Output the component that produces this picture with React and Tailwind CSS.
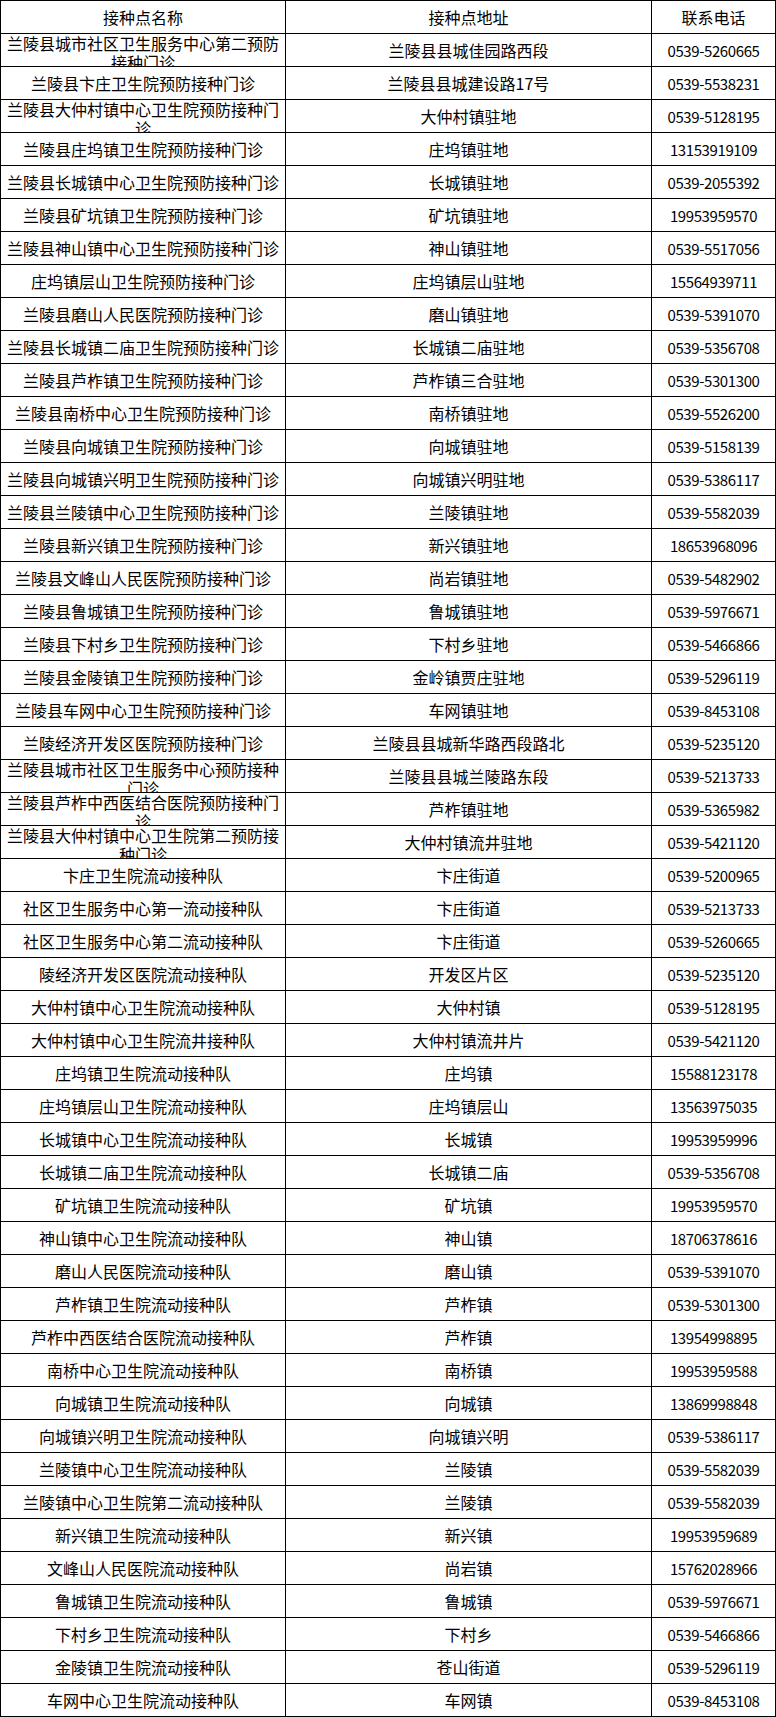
import React from "react";

const rows = [
  ["兰陵县城市社区卫生服务中心第二预防接种门诊", "兰陵县县城佳园路西段", "0539-5260665"],
  ["兰陵县卞庄卫生院预防接种门诊", "兰陵县县城建设路17号", "0539-5538231"],
  ["兰陵县大仲村镇中心卫生院预防接种门诊", "大仲村镇驻地", "0539-5128195"],
  ["兰陵县庄坞镇卫生院预防接种门诊", "庄坞镇驻地", "13153919109"],
  ["兰陵县长城镇中心卫生院预防接种门诊", "长城镇驻地", "0539-2055392"],
  ["兰陵县矿坑镇卫生院预防接种门诊", "矿坑镇驻地", "19953959570"],
  ["兰陵县神山镇中心卫生院预防接种门诊", "神山镇驻地", "0539-5517056"],
  ["庄坞镇层山卫生院预防接种门诊", "庄坞镇层山驻地", "15564939711"],
  ["兰陵县磨山人民医院预防接种门诊", "磨山镇驻地", "0539-5391070"],
  ["兰陵县长城镇二庙卫生院预防接种门诊", "长城镇二庙驻地", "0539-5356708"],
  ["兰陵县芦柞镇卫生院预防接种门诊", "芦柞镇三合驻地", "0539-5301300"],
  ["兰陵县南桥中心卫生院预防接种门诊", "南桥镇驻地", "0539-5526200"],
  ["兰陵县向城镇卫生院预防接种门诊", "向城镇驻地", "0539-5158139"],
  ["兰陵县向城镇兴明卫生院预防接种门诊", "向城镇兴明驻地", "0539-5386117"],
  ["兰陵县兰陵镇中心卫生院预防接种门诊", "兰陵镇驻地", "0539-5582039"],
  ["兰陵县新兴镇卫生院预防接种门诊", "新兴镇驻地", "18653968096"],
  ["兰陵县文峰山人民医院预防接种门诊", "尚岩镇驻地", "0539-5482902"],
  ["兰陵县鲁城镇卫生院预防接种门诊", "鲁城镇驻地", "0539-5976671"],
  ["兰陵县下村乡卫生院预防接种门诊", "下村乡驻地", "0539-5466866"],
  ["兰陵县金陵镇卫生院预防接种门诊", "金岭镇贾庄驻地", "0539-5296119"],
  ["兰陵县车网中心卫生院预防接种门诊", "车网镇驻地", "0539-8453108"],
  ["兰陵经济开发区医院预防接种门诊", "兰陵县县城新华路西段路北", "0539-5235120"],
  ["兰陵县城市社区卫生服务中心预防接种门诊", "兰陵县县城兰陵路东段", "0539-5213733"],
  ["兰陵县芦柞中西医结合医院预防接种门诊", "芦柞镇驻地", "0539-5365982"],
  ["兰陵县大仲村镇中心卫生院第二预防接种门诊", "大仲村镇流井驻地", "0539-5421120"],
  ["卞庄卫生院流动接种队", "卞庄街道", "0539-5200965"],
  ["社区卫生服务中心第一流动接种队", "卞庄街道", "0539-5213733"],
  ["社区卫生服务中心第二流动接种队", "卞庄街道", "0539-5260665"],
  ["陵经济开发区医院流动接种队", "开发区片区", "0539-5235120"],
  ["大仲村镇中心卫生院流动接种队", "大仲村镇", "0539-5128195"],
  ["大仲村镇中心卫生院流井接种队", "大仲村镇流井片", "0539-5421120"],
  ["庄坞镇卫生院流动接种队", "庄坞镇", "15588123178"],
  ["庄坞镇层山卫生院流动接种队", "庄坞镇层山", "13563975035"],
  ["长城镇中心卫生院流动接种队", "长城镇", "19953959996"],
  ["长城镇二庙卫生院流动接种队", "长城镇二庙", "0539-5356708"],
  ["矿坑镇卫生院流动接种队", "矿坑镇", "19953959570"],
  ["神山镇中心卫生院流动接种队", "神山镇", "18706378616"],
  ["磨山人民医院流动接种队", "磨山镇", "0539-5391070"],
  ["芦柞镇卫生院流动接种队", "芦柞镇", "0539-5301300"],
  ["芦柞中西医结合医院流动接种队", "芦柞镇", "13954998895"],
  ["南桥中心卫生院流动接种队", "南桥镇", "19953959588"],
  ["向城镇卫生院流动接种队", "向城镇", "13869998848"],
  ["向城镇兴明卫生院流动接种队", "向城镇兴明", "0539-5386117"],
  ["兰陵镇中心卫生院流动接种队", "兰陵镇", "0539-5582039"],
  ["兰陵镇中心卫生院第二流动接种队", "兰陵镇", "0539-5582039"],
  ["新兴镇卫生院流动接种队", "新兴镇", "19953959689"],
  ["文峰山人民医院流动接种队", "尚岩镇", "15762028966"],
  ["鲁城镇卫生院流动接种队", "鲁城镇", "0539-5976671"],
  ["下村乡卫生院流动接种队", "下村乡", "0539-5466866"],
  ["金陵镇卫生院流动接种队", "苍山街道", "0539-5296119"],
  ["车网中心卫生院流动接种队", "车网镇", "0539-8453108"],
];

function Cell({ children, phone }) {
  return (
    <div
      className={
        "h-[33px] overflow-hidden border-r border-b border-black flex flex-col [justify-content:safe_center] px-[2px] text-center leading-[19px] " +
        (phone ? "text-[15px] tracking-[-0.4px]" : "text-[16px]")
      }
    >
      <span>{children}</span>
    </div>
  );
}

export default function App() {
  return (
    <div
      className="w-[776px] bg-white text-black"
      style={{ fontFamily: '"Noto Sans CJK SC", "Noto Sans", sans-serif' }}
    >
      <div className="border-l border-t border-black">
        <div className="grid grid-cols-[285px_366px_124px]">
          <Cell>接种点名称</Cell>
          <Cell>接种点地址</Cell>
          <Cell>联系电话</Cell>
        </div>
        {rows.map((r, i) => (
          <div key={i} className="grid grid-cols-[285px_366px_124px]">
            <Cell>{r[0]}</Cell>
            <Cell>{r[1]}</Cell>
            <Cell phone>{r[2]}</Cell>
          </div>
        ))}
      </div>
    </div>
  );
}
